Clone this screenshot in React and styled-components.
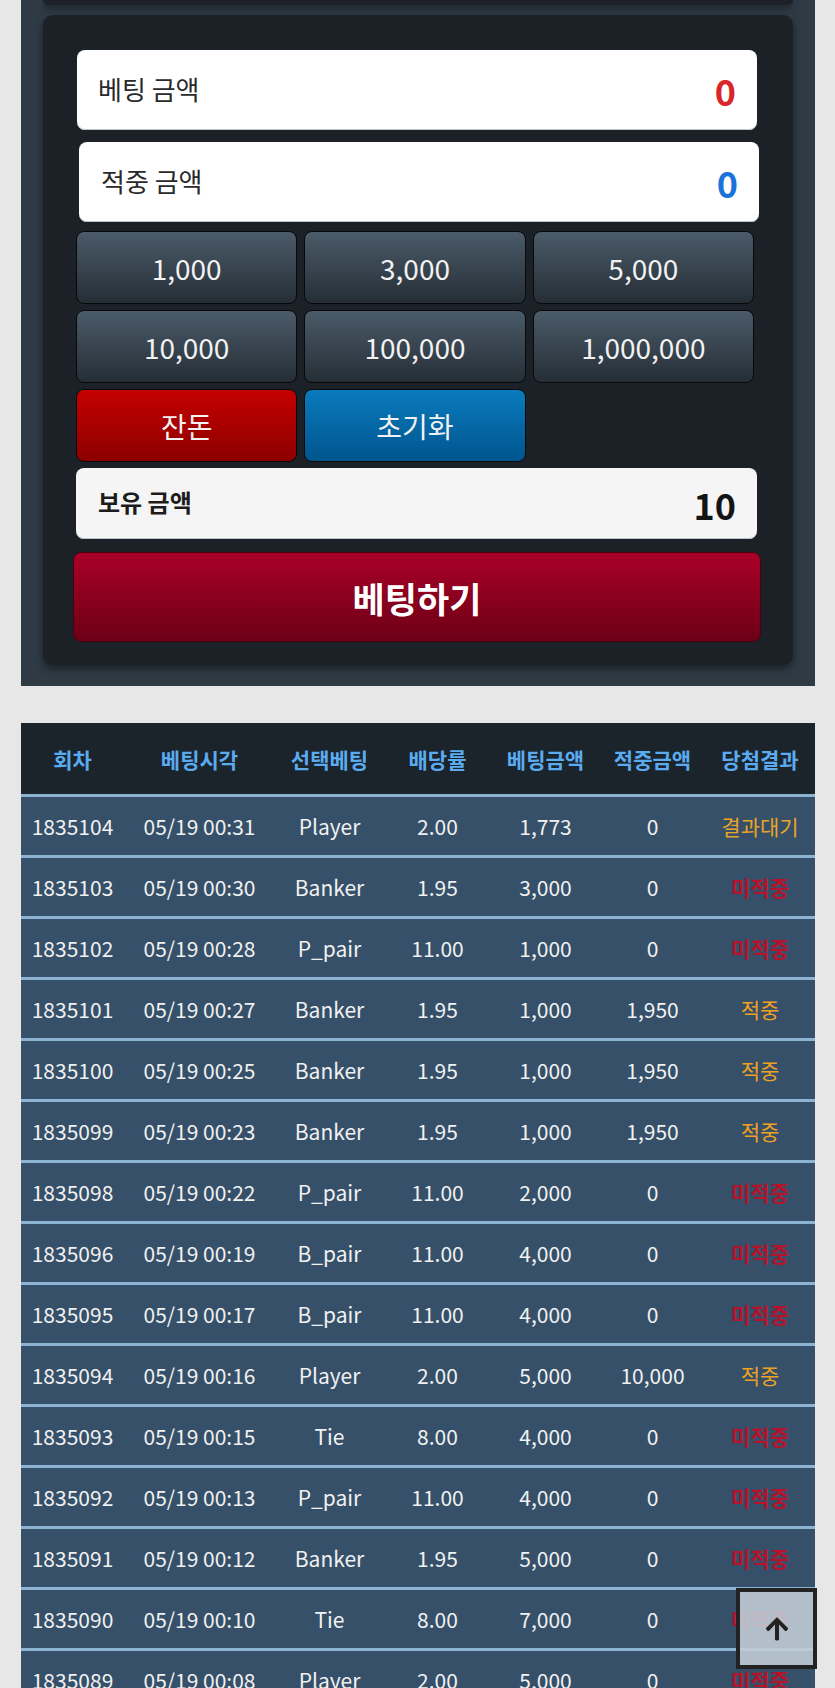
import React from "react";
import styled, { createGlobalStyle } from "styled-components";
import { FaArrowUp } from "react-icons/fa";

const Global = createGlobalStyle`
  html, body { margin: 0; padding: 0; }
  body {
    background: #e7e7e7;
    font-family: "Noto Sans CJK KR", "Noto Sans", sans-serif;
  }
`;

const Page = styled.div`
  padding: 0 20px 40px 21px;
`;

const Panel = styled.section`
  background: #2e3b45;
  padding: 0 22px 21px 22px;
  display: flex;
  flex-direction: column;
`;

const CardTail = styled.div`
  height: 5px;
  background: #1b2126;
  border-radius: 0 0 10px 10px;
  box-shadow: 0 3px 6px rgba(0, 0, 0, 0.45);
  margin-bottom: 10px;
`;

const BetCard = styled.div`
  background: #1b2126;
  border-radius: 10px;
  box-shadow: 0 4px 8px rgba(0, 0, 0, 0.45);
  padding: 35px 0 23px;
  display: flex;
  flex-direction: column;
`;

const AmountBox = styled.div`
  display: flex;
  align-items: center;
  justify-content: space-between;
  height: ${(p) => p.$h}px;
  margin: ${(p) => p.$mt}px ${(p) => p.$mr}px 0 ${(p) => p.$ml}px;
  padding: 0 21px 0 ${(p) => p.$pl}px;
  background: ${(p) => p.$bg};
  border-radius: 8px;
  box-shadow: inset 0 -1px 0 #b8c4d0;
`;

const AmountLabel = styled.span`
  font-size: ${(p) => (p.$bold ? 24 : 26)}px;
  font-weight: ${(p) => (p.$bold ? 700 : 400)};
  color: ${(p) => (p.$bold ? "#1c1c1c" : "#2a2a2a")};
  margin-top: -4px;
`;

const AmountValue = styled.span`
  font-size: 36px;
  font-weight: 700;
  color: ${(p) => p.$color};
`;

const ChipGrid = styled.div`
  display: grid;
  grid-template-columns: repeat(3, 1fr);
  column-gap: 7px;
  row-gap: 6px;
  margin: 9px 39px 0 33px;
`;

const ChipButton = styled.button`
  height: 73px;
  border: 1px solid #07090b;
  border-radius: 8px;
  background: ${(p) =>
    p.$tone === "red"
      ? "linear-gradient(#c40000, #8c0000)"
      : p.$tone === "blue"
      ? "linear-gradient(#0a7bbd, #00558e)"
      : "linear-gradient(#4b5b69, #252e36)"};
  color: #f2f2f2;
  font-family: inherit;
  font-size: 28px;
  font-weight: 400;
  padding: 0;
  cursor: pointer;
`;

const SubmitButton = styled.button`
  height: 90px;
  margin: 13px 32px 0 30px;
  border: 1px solid #4a0010;
  border-radius: 8px;
  background: linear-gradient(#aa0028, #6c0016);
  color: #ffffff;
  font-family: inherit;
  font-size: 35px;
  font-weight: 700;
  cursor: pointer;
`;

const Table = styled.table`
  margin-top: 37px;
  width: 794px;
  border-collapse: collapse;
  table-layout: fixed;
`;

const HeadCell = styled.th`
  height: 71px;
  background: #1b232b;
  color: #5aabf0;
  font-size: 21px;
  font-weight: 700;
  text-align: center;
  padding: 0;
  white-space: nowrap;
`;

const Row = styled.tr`
  background: #355068;
  border-top: 3px solid #8cb3d1;
`;

const Cell = styled.td`
  height: 58px;
  padding: 0;
  text-align: center;
  font-size: 21px;
  color: ${(p) => p.$color || "#f1f1f1"};
  font-weight: ${(p) => (p.$strong ? 700 : 400)};
  white-space: nowrap;
`;

const TopButton = styled.button`
  position: fixed;
  right: 18px;
  bottom: 19px;
  width: 81px;
  height: 81px;
  border: 4px solid #222;
  background: rgba(196, 206, 216, 0.88);
  display: flex;
  align-items: center;
  justify-content: center;
  padding: 0;
  color: #222;
  cursor: pointer;
`;

const widths = [103, 151, 109, 107, 109, 105, 110];
const heads = ["회차", "베팅시각", "선택베팅", "배당률", "베팅금액", "적중금액", "당첨결과"];

const rows = [
  ["1835104", "05/19 00:31", "Player", "2.00", "1,773", "0", "결과대기"],
  ["1835103", "05/19 00:30", "Banker", "1.95", "3,000", "0", "미적중"],
  ["1835102", "05/19 00:28", "P_pair", "11.00", "1,000", "0", "미적중"],
  ["1835101", "05/19 00:27", "Banker", "1.95", "1,000", "1,950", "적중"],
  ["1835100", "05/19 00:25", "Banker", "1.95", "1,000", "1,950", "적중"],
  ["1835099", "05/19 00:23", "Banker", "1.95", "1,000", "1,950", "적중"],
  ["1835098", "05/19 00:22", "P_pair", "11.00", "2,000", "0", "미적중"],
  ["1835096", "05/19 00:19", "B_pair", "11.00", "4,000", "0", "미적중"],
  ["1835095", "05/19 00:17", "B_pair", "11.00", "4,000", "0", "미적중"],
  ["1835094", "05/19 00:16", "Player", "2.00", "5,000", "10,000", "적중"],
  ["1835093", "05/19 00:15", "Tie", "8.00", "4,000", "0", "미적중"],
  ["1835092", "05/19 00:13", "P_pair", "11.00", "4,000", "0", "미적중"],
  ["1835091", "05/19 00:12", "Banker", "1.95", "5,000", "0", "미적중"],
  ["1835090", "05/19 00:10", "Tie", "8.00", "7,000", "0", "미적중"],
  ["1835089", "05/19 00:08", "Player", "2.00", "5,000", "0", "미적중"],
];

const resultColor = (r) => (r === "미적중" ? "#b5122b" : r === "적중" ? "#f0a11f" : "#e9a526");

export default function App() {
  return (
    <>
      <Global />
      <Page>
        <Panel>
          <CardTail />
          <BetCard>
            <AmountBox $h={80} $mt={0} $ml={34} $mr={36} $pl={21} $bg="#ffffff">
              <AmountLabel>베팅 금액</AmountLabel>
              <AmountValue $color="#d9262a">0</AmountValue>
            </AmountBox>
            <AmountBox $h={80} $mt={12} $ml={36} $mr={34} $pl={22} $bg="#ffffff">
              <AmountLabel>적중 금액</AmountLabel>
              <AmountValue $color="#1b72d8">0</AmountValue>
            </AmountBox>
            <ChipGrid>
              {["1,000", "3,000", "5,000", "10,000", "100,000", "1,000,000"].map((v) => (
                <ChipButton key={v}>{v}</ChipButton>
              ))}
              <ChipButton $tone="red">잔돈</ChipButton>
              <ChipButton $tone="blue">초기화</ChipButton>
            </ChipGrid>
            <AmountBox $h={71} $mt={6} $ml={33} $mr={36} $pl={22} $bg="#f5f5f5">
              <AmountLabel $bold>보유 금액</AmountLabel>
              <AmountValue $color="#141414">10</AmountValue>
            </AmountBox>
            <SubmitButton>베팅하기</SubmitButton>
          </BetCard>
        </Panel>

        <Table>
          <colgroup>
            {widths.map((w, i) => (
              <col key={i} style={{ width: w }} />
            ))}
          </colgroup>
          <thead>
            <tr>
              {heads.map((h) => (
                <HeadCell key={h}>{h}</HeadCell>
              ))}
            </tr>
          </thead>
          <tbody>
            {rows.map((r) => (
              <Row key={r[0]}>
                {r.slice(0, 6).map((c, i) => (
                  <Cell key={i}>{c}</Cell>
                ))}
                <Cell $color={resultColor(r[6])} $strong={r[6] === "미적중"}>
                  {r[6]}
                </Cell>
              </Row>
            ))}
          </tbody>
        </Table>
      </Page>
      <TopButton aria-label="top">
        <FaArrowUp size={26} />
      </TopButton>
    </>
  );
}
